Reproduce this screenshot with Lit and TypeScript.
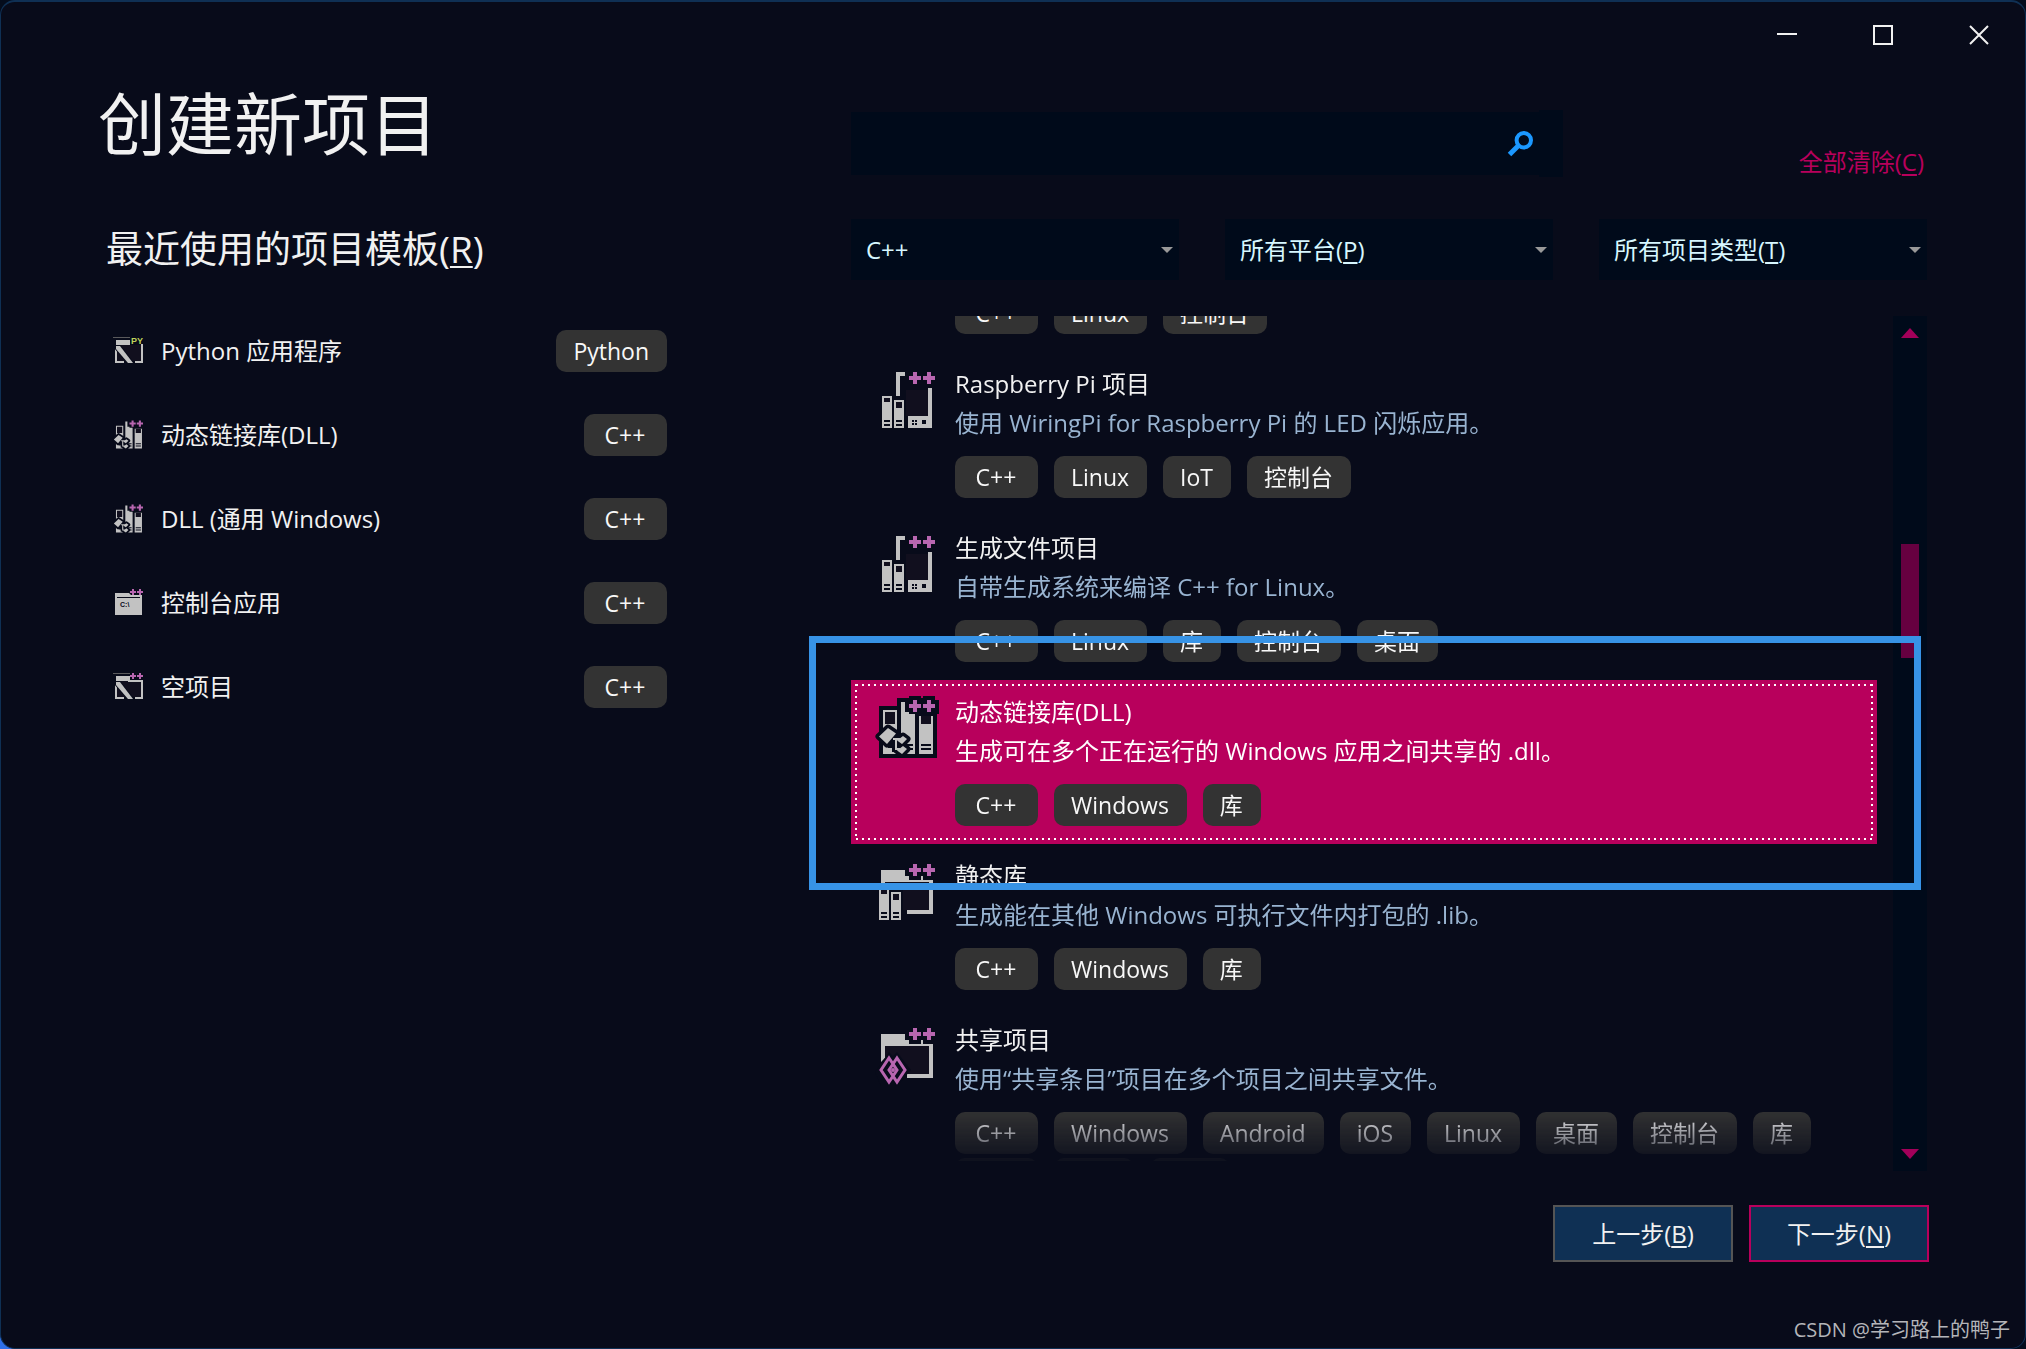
import { LitElement, html, svg, css, nothing } from "lit";
import { customElement, property, state } from "lit/decorators.js";
import { classMap } from "lit/directives/class-map.js";

type Glyph = "linux" | "dll" | "static" | "shared";
type SmallGlyph = "python" | "dll" | "console" | "empty";

interface Template {
  icon: Glyph;
  title: string;
  text: string;
  tags: string[];
  more?: boolean;
}

const TEMPLATES: Template[] = [
  { icon: "linux", title: "Raspberry Pi 项目", text: "使用 WiringPi for Raspberry Pi 的 LED 闪烁应用。", tags: ["C++", "Linux", "IoT", "控制台"] },
  { icon: "linux", title: "生成文件项目", text: "自带生成系统来编译 C++ for Linux。", tags: ["C++", "Linux", "库", "控制台", "桌面"] },
  { icon: "dll", title: "动态链接库(DLL)", text: "生成可在多个正在运行的 Windows 应用之间共享的 .dll。", tags: ["C++", "Windows", "库"] },
  { icon: "static", title: "静态库", text: "生成能在其他 Windows 可执行文件内打包的 .lib。", tags: ["C++", "Windows", "库"] },
  { icon: "shared", title: "共享项目", text: "使用“共享条目”项目在多个项目之间共享文件。", tags: ["C++", "Windows", "Android", "iOS", "Linux", "桌面", "控制台", "库"], more: true },
];

const RECENT: { icon: SmallGlyph; name: string; lang: string }[] = [
  { icon: "python", name: "Python 应用程序", lang: "Python" },
  { icon: "dll", name: "动态链接库(DLL)", lang: "C++" },
  { icon: "dll", name: "DLL (通用 Windows)", lang: "C++" },
  { icon: "console", name: "控制台应用", lang: "C++" },
  { icon: "empty", name: "空项目", lang: "C++" },
];

const LIGHT = "#c2c2c2";
const INK = "#080b1a";
const FILL = "#110f1e";
const PLUM = "#b866b0";

const pluses = svg`<path fill=${PLUM} d="M53 22h4v4h4v4h-4v4h-4v-4h-4v-4h4zM67 22h4v4h4v4h-4v4h-4v-4h-4v-4h4z"/>`;

const books = (x: number, y: number) => svg`
  <g transform="translate(${x} ${y})">
    <path fill=${LIGHT} d="M0 0h10v32h-10zM12 4h10v28h-10z"/>
    <path fill=${FILL} d="M2 2h6v4h-6zM14 6h6v6h-6z"/>
    <path fill=${INK} d="M2 24h6v2h-6zM2 28h6v2h-6zM14 24h6v2h-6zM14 28h6v2h-6z"/>
  </g>`;

const linuxArt = svg`
  <path fill=${FILL} d="M46 40h22v26h-22z"/>
  <path fill=${LIGHT} d="M36 22h9v4h-5v20h-4zM68 38h4v40h-24v-12h20z"/>
  <path fill=${INK} d="M62 70h4v4h-4zM52 70h2v2h-2zM55 70h2v2h-2zM52 73h2v2h-2zM55 73h2v2h-2z"/>
  ${books(22, 46)}${pluses}`;

const dllArt = svg`
  <path fill=${INK} d="M19 28h18v-8h12v-2h12v2h2v-2h12v4h4v14h-2v44h-58z"/>
  <path fill=${LIGHT} d="M23 32h14v44h-14zM41 24h4v10h4v2h6v40h-14zM59 38h14v38h-14z"/>
  <path fill=${FILL} d="M25 34h10v12h-10zM61 38h10v8h-10z"/>
  <path fill=${INK} d="M43 66h10v2h-10zM43 70h10v2h-10zM61 66h10v2h-10zM61 70h10v2h-10z"/>
  <path fill=${INK} d="M28 66l4-3h4v11h-4v-4h-4z"/>
  <g fill=${INK} stroke=${INK} stroke-width="7" stroke-linejoin="round">
    <path d="M19 58.500L28 50l8 5.500-9 10.500zM37 62.500l6-4.500 4 3-5 5zM37 72.500l6-4.500 4 3-5 5z"/>
  </g>
  <path fill="none" stroke=${LIGHT} stroke-width="2" d="M33 61h7M36 61v10h4"/>
  <path fill=${LIGHT} d="M19 58.500L28 50l8 5.500-9 10.500zM37 62.500l6-4.500 4 3-5 5zM37 72.500l6-4.500 4 3-5 5z"/>
  ${pluses}`;

const folder = svg`
  <path fill=${FILL} d="M25 40h44v28h-44z"/>
  <path fill=${LIGHT} d="M21 28h24v6h4v4h12v-4h2v4h10v34h-26v-4h22v-28h-44v12l-4 4z"/>`;

const staticArt = svg`${folder}
  <path fill=${INK} d="M17 44h26v36h-26z"/>
  ${books(19, 46)}${pluses}`;

const sharedArt = svg`${folder}
  <path fill=${INK} d="M29 46l4 4 4-4 14 18-14 16-16 0-6-14z"/>
  <path fill="none" stroke=${PLUM} stroke-width="3" d="M29 52l8 12-8 12-8-12zM37 52l8 12-8 12-8-12z"/>
  <circle cx="33" cy="64" r="2" fill=${PLUM}/>${pluses}`;

const ART: Record<Glyph, unknown> = { linux: linuxArt, dll: dllArt, static: staticArt, shared: sharedArt };

const smallPluses = svg`<path fill=${PLUM} d="M42 17h2v2h2v2h-2v2h-2v-2h-2v-2h2zM49 17h2v2h2v2h-2v2h-2v-2h-2v-2h2z"/>`;
const slashed = svg`
  <path fill=${FILL} d="M27 25h24v16h-24z"/>
  <path stroke="#5a5a5c" d="M23 17.500h17"/>
  <path fill=${LIGHT} d="M26 20h14v5h-14zM25 26h2v15h7v2h-9zM51 24h2v19h-8v-2h6z"/>
  <path fill=${LIGHT} stroke=${INK} paint-order="stroke" stroke-width="2" d="M26 26l4 0 13 17h-5l-12-14z"/>`;

const SMALL: Record<SmallGlyph, unknown> = {
  python: svg`${slashed}<text class="py" x="41" y="24">PY</text>`,
  empty: svg`${slashed}<path fill=${LIGHT} d="M38 24h15v2h-15z"/>${smallPluses}`,
  dll: svg`<g transform="translate(14 5) scale(.52)">${dllArt}</g>`,
  console: svg`<path fill=${LIGHT} d="M25 21h14l2 2h11v20h-27z"/><path fill=${INK} d="M27 25h23v1h-23z"/>
    <text class="prompt" x="30" y="35">C:\\</text>${smallPluses}`,
};

const baseText = css`
  * {
    box-sizing: border-box;
  }
  button,
  input,
  select {
    font: inherit;
    color: inherit;
    border: 0;
    border-radius: 0;
    padding: 0;
    margin: 0;
    background: none;
  }
  ul {
    list-style: none;
    margin: 0;
    padding: 0;
  }
  .chip {
    display: inline-flex;
    align-items: center;
    justify-content: center;
    flex: none;
    height: 42px;
    padding: 0 18px 0 17px;
    border-radius: 10px;
    background: #333333;
    color: #f8f8f8;
    font-size: 23px;
    line-height: 32px;
    white-space: nowrap;
  }
  .chip.lang {
    min-width: 83px;
  }
`;

@customElement("template-item")
export class TemplateItem extends LitElement {
  static styles = [
    baseText,
    css`
      :host {
        display: block;
      }
      .item {
        position: relative;
        display: grid;
        grid-template-columns: 104px 1fr;
        color: #f1f1f1;
      }
      .art {
        width: 104px;
        height: 100px;
      }
      .body {
        padding: 13px 0 18px;
        min-width: 0;
      }
      .title,
      .text {
        margin: 0;
        font-size: 24px;
        font-weight: 400;
        line-height: 38px;
      }
      .text {
        color: #99b4d1;
        line-height: 40px;
      }
      .tags {
        display: flex;
        flex-wrap: wrap;
        gap: 4px 16px;
        margin-top: 13px;
      }
      .blank {
        width: 80px;
      }
      .selected {
        background: #b8005c;
        color: #ffffff;
      }
      .selected .text {
        color: #ffffff;
      }
      .selected::after {
        content: "";
        position: absolute;
        inset: 4px;
        pointer-events: none;
        background:
          repeating-linear-gradient(90deg, transparent 0 1px, #fff 1px 3px, transparent 3px 6px) top / 100% 2px no-repeat,
          repeating-linear-gradient(90deg, transparent 0 1px, #fff 1px 3px, transparent 3px 6px) bottom / 100% 2px no-repeat,
          repeating-linear-gradient(180deg, transparent 0 5px, #fff 5px 7px, transparent 7px 11px) left / 2px 6px repeat-y,
          repeating-linear-gradient(180deg, #fff 0 2px, transparent 2px 6px) right / 2px 100% no-repeat;
      }
      .selected::after {
        background:
          repeating-linear-gradient(90deg, transparent 0 1px, #fff 1px 3px, transparent 3px 6px) top / 100% 2px no-repeat,
          repeating-linear-gradient(90deg, transparent 0 1px, #fff 1px 3px, transparent 3px 6px) bottom / 100% 2px no-repeat,
          repeating-linear-gradient(180deg, #fff 0 2px, transparent 2px 6px) left / 2px 100% no-repeat,
          repeating-linear-gradient(180deg, #fff 0 2px, transparent 2px 6px) right / 2px 100% no-repeat;
      }
    `,
  ];

  @property({ attribute: false }) data!: Template;
  @property({ type: Boolean }) selected = false;

  render() {
    const { icon, title, text, tags, more } = this.data;
    return html`
      <article class=${classMap({ item: true, selected: this.selected })}>
        <svg class="art" viewBox="-9 2 104 100" aria-hidden="true">${ART[icon]}</svg>
        <div class="body">
          <h3 class="title">${title}</h3>
          <p class="text">${text}</p>
          <div class="tags">
            ${tags.map((t) => html`<span class=${classMap({ chip: true, lang: t === "C++" })}>${t}</span>`)}
            ${more ? html`<span class="chip lang"></span><span class="chip blank"></span><span class="chip blank"></span>` : nothing}
          </div>
        </div>
      </article>
    `;
  }
}

@customElement("app-root")
export class AppRoot extends LitElement {
  static styles = [
    baseText,
    css`
      :host {
        display: block;
        background: radial-gradient(circle at bottom left, #2f6fe8 0 8px, #040c1c 60px);
        font-family: "Open Sans", "Noto Sans CJK SC", sans-serif;
        font-size: 24px;
        color: #f1f1f1;
      }
      .window {
        position: relative;
        display: flex;
        flex-direction: column;
        height: 100vh;
        min-height: 900px;
        background: #080b1a;
        border: 1px solid #0f3054;
        border-top-width: 2px;
        border-radius: 15px;
        overflow: hidden;
      }
      .caption {
        display: flex;
        justify-content: flex-end;
        flex: none;
        height: 66px;
        margin-right: -2px;
      }
      .caption button {
        width: 96px;
        display: grid;
        place-items: center;
      }
      .caption svg {
        width: 20px;
        height: 20px;
        fill: none;
        stroke: #f1f1f1;
        stroke-width: 2;
      }
      .columns {
        flex: 1;
        min-height: 0;
        display: grid;
        grid-template-columns: 569fr 1076fr;
        grid-template-rows: minmax(0, 1fr);
        gap: 184px;
        padding: 0 98px 86px 97px;
      }
      h1 {
        margin: 0;
        padding-top: 14px;
        font-size: 68px;
        font-weight: 400;
        line-height: 84px;
      }
      h2 {
        margin: 59px 0 0 8px;
        font-size: 37px;
        font-weight: 400;
        line-height: 48px;
      }
      u {
        text-decoration-thickness: 2px;
        text-underline-offset: 3px;
      }
      .recent {
        margin: 36px 0 0 14px;
      }
      .recent button {
        width: 100%;
        height: 84px;
        display: grid;
        grid-template-columns: 34px 1fr auto;
        align-items: center;
        gap: 15px;
        text-align: left;
        line-height: 38px;
      }
      .small {
        width: 34px;
        height: 30px;
      }
      .py {
        font: 700 9px "Liberation Sans", sans-serif;
        fill: #bfd35a;
      }
      .prompt {
        font: 700 7px "Liberation Sans", sans-serif;
        fill: #080b1a;
      }
      .right {
        display: flex;
        flex-direction: column;
        min-width: 0;
        padding-top: 42px;
      }
      .top {
        display: grid;
        grid-template-columns: 712fr 364fr;
        justify-items: end;
        align-items: end;
      }
      .search {
        display: flex;
        align-items: center;
        width: 100%;
      }
      .search input {
        flex: 1;
        min-width: 0;
        height: 63px;
        padding: 0 14px;
        background: #000a1a;
        outline: none;
      }
      .search button {
        height: 63px;
        width: 62px;
        background: #000a1a;
        display: grid;
        place-items: center end;
        padding-right: 6px;
      }
      .search svg {
        width: 26px;
        height: 26px;
      }
      .cap {
        width: 24px;
        height: 67px;
        background: #000a1a;
      }
      .clear {
        color: #b8005c;
        text-decoration: none;
        line-height: 30px;
        margin-right: 3px;
      }
      .filters {
        display: grid;
        grid-template-columns: repeat(3, 1fr);
        gap: 46px;
        margin-top: 42px;
      }
      .filter {
        display: grid;
        grid-template-columns: 1fr auto;
        align-items: center;
        height: 61px;
        background: #000a1a;
        color: #d7f7ff;
        line-height: 32px;
      }
      .filter select {
        grid-area: 1 / 1 / 2 / 3;
        width: 100%;
        height: 100%;
        appearance: none;
        padding: 0 30px 0 15px;
        outline: none;
      }
      .filter option {
        background: #000a1a;
      }
      .filter span {
        grid-area: 1 / 1;
        padding-left: 15px;
        pointer-events: none;
        z-index: 1;
      }
      .filter svg {
        grid-area: 1 / 2;
        width: 12px;
        height: 6px;
        margin-right: 6px;
        fill: #999999;
        pointer-events: none;
      }
      .results {
        position: relative;
        flex: 1;
        min-height: 0;
        display: flex;
        justify-content: space-between;
        margin-top: 36px;
      }
      .viewport {
        flex: 1;
        margin: 0 16px 10px 0;
        overflow: hidden;
        mask-image: linear-gradient(to top, rgb(0 0 0 / 0.16), #000 52px);
      }
      .list {
        margin-top: -24px;
      }
      .tail {
        display: flex;
        gap: 16px;
        padding: 0 0 18px 104px;
      }
      .bar {
        width: 34px;
        background: #000a1a;
        display: flex;
        flex-direction: column;
        align-items: center;
      }
      .bar button {
        width: 100%;
        height: 34px;
        display: grid;
        place-items: center;
      }
      .bar svg {
        width: 18px;
        height: 10px;
        fill: #a3005a;
      }
      .track {
        flex: 1;
        display: grid;
        grid-template-rows: 194fr 114fr 479fr;
      }
      .thumb {
        grid-row: 2;
        width: 18px;
        background: #660040;
      }
      .marker {
        position: absolute;
        left: -42px;
        right: 6px;
        top: 320px;
        height: 254px;
        border: 7px solid #3793e6;
        pointer-events: none;
      }
      .actions {
        display: flex;
        justify-content: flex-end;
        gap: 16px;
        margin: 34px -2px 0 0;
      }
      .actions button {
        width: 180px;
        height: 57px;
        background: #0f3054;
        border: 2px solid #555555;
        line-height: 32px;
      }
      .actions .next {
        border-color: #b8005c;
      }
      .credit {
        position: absolute;
        right: 15px;
        bottom: 4px;
        font-size: 20px;
        line-height: 28px;
        color: #b4b5b9;
      }
    `,
  ];

  @state() private selected = 2;

  private filter(label: string, key: string) {
    return html`<label class="filter">
      <span>${key ? html`${label}(<u>${key}</u>)` : nothing}</span>
      <select aria-label=${label}>
        <option>${key ? "" : label}</option>
      </select>
      <svg viewBox="0 0 12 6" aria-hidden="true"><path d="M0 0h12l-6 6z" /></svg>
    </label>`;
  }

  render() {
    return html`
      <main class="window">
        <div class="caption">
          <button aria-label="最小化"><svg viewBox="0 0 20 20"><path d="M0 9h20" /></svg></button>
          <button aria-label="最大化"><svg viewBox="0 0 20 20"><path d="M1 1h18v18h-18z" /></svg></button>
          <button aria-label="关闭"><svg viewBox="0 0 20 20"><path d="M1 1l18 18M19 1l-18 18" /></svg></button>
        </div>
        <div class="columns">
          <section class="left">
            <h1>创建新项目</h1>
            <h2>最近使用的项目模板(<u>R</u>)</h2>
            <ul class="recent">
              ${RECENT.map(
                (r) => html`<li>
                  <button>
                    <svg class="small" viewBox="22 16 34 30" aria-hidden="true">${SMALL[r.icon]}</svg>
                    <span>${r.name}</span>
                    <span class="chip lang">${r.lang}</span>
                  </button>
                </li>`
              )}
            </ul>
          </section>
          <section class="right">
            <div class="top">
              <form class="search" @submit=${(e: Event) => e.preventDefault()}>
                <input type="text" aria-label="搜索模板" />
                <button aria-label="搜索">
                  <svg viewBox="0 0 26 26" fill="none" stroke="#1b98ff">
                    <circle cx="16.800" cy="9.200" r="7.200" stroke-width="4" />
                    <path d="M12 14L2.500 23.500" stroke-width="5" />
                  </svg>
                </button>
                <span class="cap"></span>
              </form>
              <a class="clear" href="#">全部清除(<u>C</u>)</a>
            </div>
            <div class="filters">
              ${this.filter("C++", "")} ${this.filter("所有平台", "P")} ${this.filter("所有项目类型", "T")}
            </div>
            <div class="results">
              <div class="viewport">
                <div class="list">
                  <div class="tail">
                    <span class="chip lang">C++</span><span class="chip">Linux</span><span class="chip">控制台</span>
                  </div>
                  <ul role="listbox">
                    ${TEMPLATES.map(
                      (t, i) => html`<li role="option" aria-selected=${i === this.selected} @click=${() => (this.selected = i)}>
                        <template-item .data=${t} ?selected=${i === this.selected}></template-item>
                      </li>`
                    )}
                  </ul>
                </div>
              </div>
              <div class="bar">
                <button aria-label="向上滚动"><svg viewBox="0 0 18 10"><path d="M0 10h18l-9-10z" /></svg></button>
                <div class="track"><div class="thumb"></div></div>
                <button aria-label="向下滚动"><svg viewBox="0 0 18 10"><path d="M0 0h18l-9 10z" /></svg></button>
              </div>
              <div class="marker"></div>
            </div>
            <div class="actions">
              <button>上一步(<u>B</u>)</button>
              <button class="next">下一步(<u>N</u>)</button>
            </div>
          </section>
        </div>
        <div class="credit">CSDN @学习路上的鸭子</div>
      </main>
    `;
  }
}
